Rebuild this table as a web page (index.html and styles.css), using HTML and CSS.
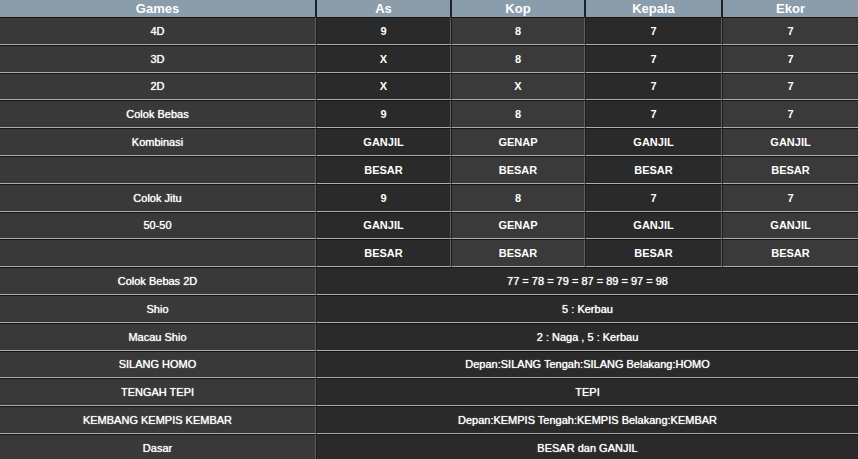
FILE: index.html
```html
<!DOCTYPE html>
<html>
<head>
<meta charset="utf-8">
<link rel="stylesheet" href="styles.css">
</head>
<body>
<table class="result">
  <colgroup>
    <col class="c-game"><col class="c-as"><col class="c-kop"><col class="c-kep"><col class="c-ekor">
  </colgroup>
  <thead>
    <tr class="head">
      <th>Games</th><th>As</th><th>Kop</th><th>Kepala</th><th>Ekor</th>
    </tr>
  </thead>
  <tbody>
    <tr><td class="g">4D</td><td class="d">9</td><td class="l">8</td><td class="d">7</td><td class="l">7</td></tr>
    <tr><td class="g">3D</td><td class="d">X</td><td class="l">8</td><td class="d">7</td><td class="l">7</td></tr>
    <tr><td class="g">2D</td><td class="d">X</td><td class="l">X</td><td class="d">7</td><td class="l">7</td></tr>
    <tr><td class="g">Colok Bebas</td><td class="d">9</td><td class="l">8</td><td class="d">7</td><td class="l">7</td></tr>
    <tr><td class="g">Kombinasi</td><td class="d">GANJIL</td><td class="l">GENAP</td><td class="d">GANJIL</td><td class="l">GANJIL</td></tr>
    <tr><td class="g"></td><td class="d">BESAR</td><td class="l">BESAR</td><td class="d">BESAR</td><td class="l">BESAR</td></tr>
    <tr><td class="g">Colok Jitu</td><td class="d">9</td><td class="l">8</td><td class="d">7</td><td class="l">7</td></tr>
    <tr><td class="g">50-50</td><td class="d">GANJIL</td><td class="l">GENAP</td><td class="d">GANJIL</td><td class="l">GANJIL</td></tr>
    <tr><td class="g"></td><td class="d">BESAR</td><td class="l">BESAR</td><td class="d">BESAR</td><td class="l">BESAR</td></tr>
    <tr><td class="g">Colok Bebas 2D</td><td class="s" colspan="4">77 = 78 = 79 = 87 = 89 = 97 = 98</td></tr>
    <tr><td class="g">Shio</td><td class="s" colspan="4">5 : Kerbau</td></tr>
    <tr><td class="g">Macau Shio</td><td class="s" colspan="4">2 : Naga , 5 : Kerbau</td></tr>
    <tr><td class="g">SILANG HOMO</td><td class="s" colspan="4">Depan:SILANG Tengah:SILANG Belakang:HOMO</td></tr>
    <tr><td class="g">TENGAH TEPI</td><td class="s" colspan="4">TEPI</td></tr>
    <tr><td class="g">KEMBANG KEMPIS KEMBAR</td><td class="s" colspan="4">Depan:KEMPIS Tengah:KEMPIS Belakang:KEMBAR</td></tr>
    <tr><td class="g">Dasar</td><td class="s" colspan="4">BESAR dan GANJIL</td></tr>
  </tbody>
</table>
</body>
</html>
```
FILE: styles.css
```css
html, body {
  margin: 0;
  padding: 0;
  background: #2a2a2a;
}

.result {
  width: 858px;
  border-collapse: separate;
  border-spacing: 0;
  table-layout: fixed;
  font-family: "Liberation Sans", Arial, sans-serif;
  color: #ffffff;
}

.c-game { width: 316px; }
.c-as { width: 135px; }
.c-kop { width: 134px; }
.c-kep { width: 137px; }
.c-ekor { width: 136px; }

.head {
  height: 17px;
}

.head th {
  background: #8b9daa;
  font-size: 13px;
  font-weight: bold;
  line-height: 17px;
  padding: 0;
  text-align: center;
  border-left: 1px solid #1f2226;
  border-right: 1px solid #1f2226;
}

.head th:first-child { border-left: 0; }
.head th:last-child { border-right: 0; }

tbody tr {
  height: 27.8px;
}

tbody td {
  padding: 0;
  text-align: center;
  font-size: 11px;
  line-height: 14px;
  border-top: 1px solid #161616;
  border-bottom: 1px solid #acacac;
  border-left: 1px solid #1c1c1c;
  border-right: 1px solid #5e5e5e;
  white-space: nowrap;
}

tbody td:first-child { border-left: 0; }
tbody td:last-child { border-right: 0; }

.g {
  background: #393939;
  text-shadow: 0 0 1px #ffffff;
}

.d {
  background: #2a2a2a;
  font-weight: bold;
}

.l {
  background: #3a3a3a;
  font-weight: bold;
}

.s {
  background: #2a2a2a;
  text-shadow: 0 0 1px #ffffff;
}
```
